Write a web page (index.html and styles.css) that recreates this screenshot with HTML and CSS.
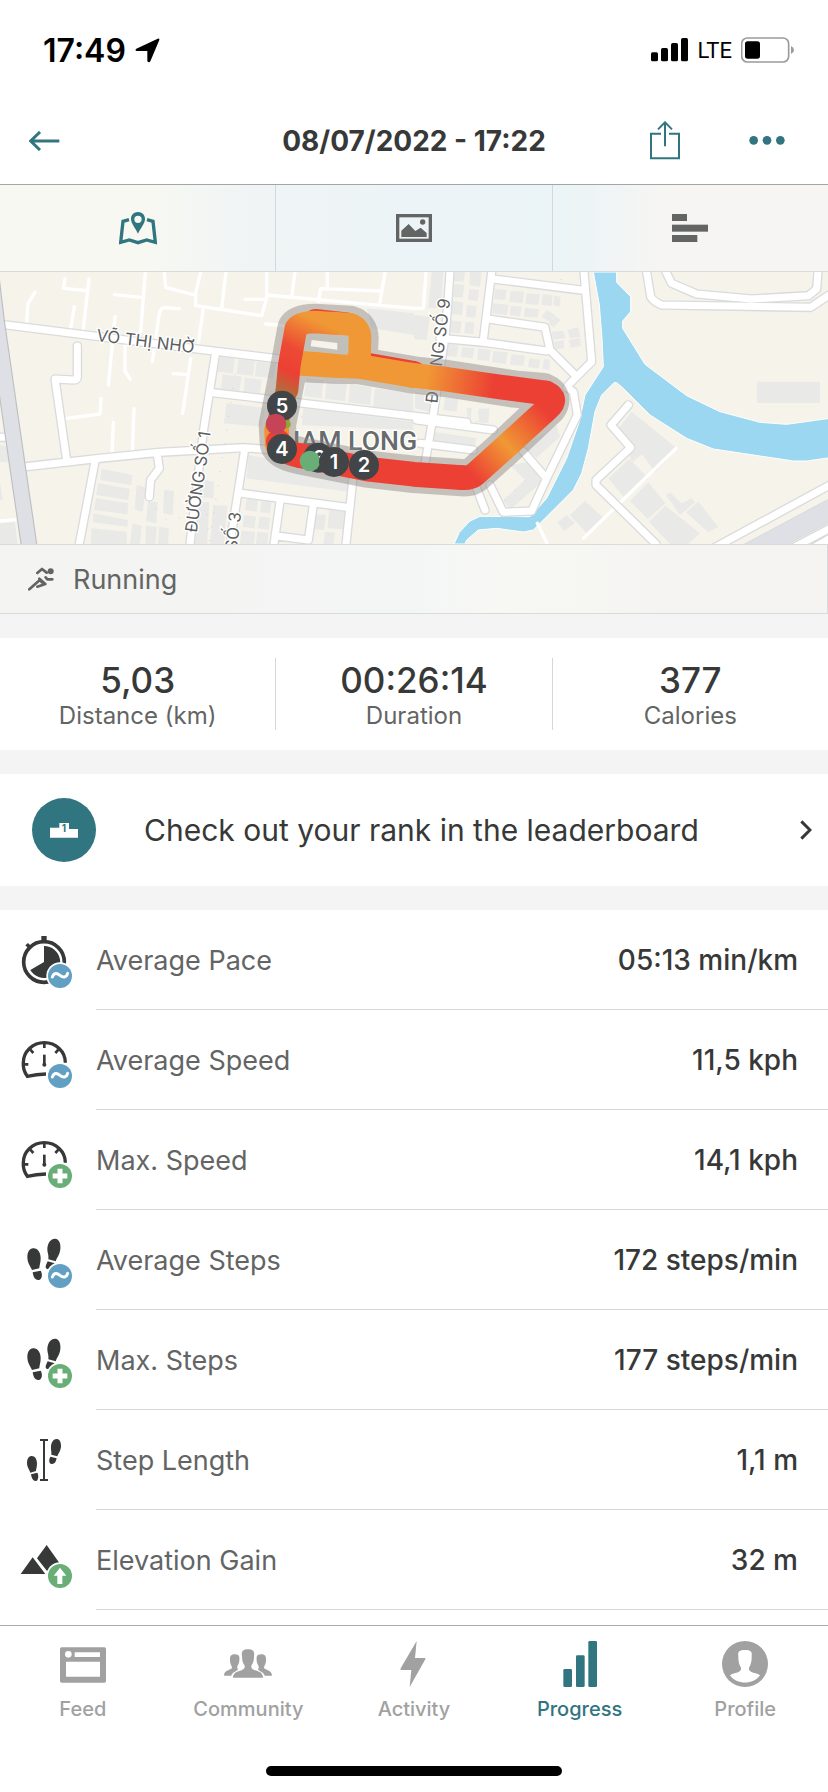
FILE: index.html
```html
<!DOCTYPE html>
<html lang="en">
<head>
  <title>Workout details</title>
  <meta charset="UTF-8">
  <meta name="viewport" content="width=device-width, initial-scale=1">
  <link rel="stylesheet" href="styles.css">
</head>
<body>
  <!-- Shared symbols -->
  <svg class="sprite" aria-hidden="true">
    <symbol id="badge-avg" viewBox="0 0 168 168">
      <circle cx="126" cy="132" r="41" fill="#fff"/>
      <circle cx="126" cy="132" r="36" fill="#619fc3"/>
      <path d="M103 135C108 122 116 122 126 130S145 137 149 124" fill="none" stroke="#fff" stroke-width="9" stroke-linecap="round"/>
    </symbol>
    <symbol id="badge-max" viewBox="0 0 168 168">
      <circle cx="126" cy="132" r="41" fill="#fff"/>
      <circle cx="126" cy="132" r="36" fill="#68ae76"/>
      <path d="M126 110v44M104 132h44" fill="none" stroke="#fff" stroke-width="15"/>
    </symbol>
    <symbol id="gauge" viewBox="0 0 168 168">
      <g fill="none" stroke="#373938" stroke-width="10">
        <path d="M84 126Q55 127 28 133Q14 114 16 92A63 60 0 0 1 142 92"/>
        <path d="M79 34v14M16 97h15M37 53l9 10M121 53l-9 10" stroke-width="8"/>
        <path d="M79 68v30" stroke-width="8"/>
      </g>
      <circle cx="79" cy="98" r="6" fill="#373938"/>
    </symbol>
    <symbol id="steps" viewBox="0 0 168 168">
      <g fill="#373938">
        <path d="M45 49C57 47 68 60 68 78C68 94 64 100 64 109L42 114C38 103 28 94 28 74C28 60 35 50 45 49Z"/>
        <path d="M44 121L68 116C74 126 73 142 62 144C50 145 46 134 44 121Z"/>
        <path d="M112 20C123 21 129 34 127 52C125 69 117 77 113 88L91 82C93 69 88 63 88 50C89 32 99 19 112 20Z"/>
        <path d="M89 88L110 94Q102 112 90 112Q80 110 84 99Z"/>
      </g>
    </symbol>
  </svg>

  <div class="status-bar">
    <div class="status-left">
      <span class="time">17:49</span>
      <svg width="25" height="25" viewBox="0 0 75 75"><path d="M4 32L68 2Q74 0 73 6L46 70Q42 76 37 70V39H6Q-2 37 4 32Z"/></svg>
    </div>
    <div class="status-right">
      <svg width="37" height="24" viewBox="0 0 111 72">
        <rect y="43" width="21" height="27" rx="5"/><rect x="30" y="30" width="21" height="40" rx="5"/>
        <rect x="60" y="15" width="21" height="55" rx="5"/><rect x="90" width="21" height="70" rx="5"/>
      </svg>
      <span class="carrier">LTE</span>
      <svg width="53" height="26" viewBox="0 0 159 78">
        <rect x="2" y="3" width="141" height="72" rx="17" fill="none" stroke="#9b9b9b" stroke-width="5"/>
        <rect x="12" y="13" width="45" height="52" rx="8"/>
        <path d="M150 27Q159 31 159 39T150 51Z" fill="#9b9b9b"/>
      </svg>
    </div>
  </div>

  <header class="header">
    <button class="icon-btn" aria-label="Back">
      <svg width="31" height="20" viewBox="0 0 93 60"><path d="M33 3L5 30L33 57M6 30H91" fill="none" stroke="#317580" stroke-width="9"/></svg>
    </button>
    <h1>08/07/2022 - 17:22</h1>
    <div class="header-actions">
      <button class="icon-btn" aria-label="Share">
        <svg width="30" height="40" viewBox="0 0 90 120"><g fill="none" stroke="#317580" stroke-width="6"><path d="M33 38H3V112H87V38H57"/><path d="M45 76V4M24 25L45 4L66 25"/></g></svg>
      </button>
      <button class="icon-btn" aria-label="More">
        <svg width="36" height="10" viewBox="0 0 108 30"><g fill="#317580"><circle cx="14" cy="13" r="13"/><circle cx="54" cy="13" r="13"/><circle cx="94" cy="13" r="13"/></g></svg>
      </button>
    </div>
  </header>

  <main>
    <div class="view-tabs">
      <button aria-label="Map">
        <svg width="38" height="34" viewBox="0 0 114 102">
          <path d="M30 26L12 31L5 94L31 87L57 95L83 87L109 94L102 31L84 26" fill="none" stroke="#317580" stroke-width="10"/>
          <path fill="#317580" fill-rule="evenodd" d="M57 3C44 3 36 12 36 24C36 38 50 52 57 68C64 52 78 38 78 24C78 12 70 3 57 3ZM57 14A11 11 0 1 1 57 36A11 11 0 1 1 57 14Z"/>
        </svg>
      </button>
      <button aria-label="Photos">
        <svg width="36" height="28" viewBox="0 0 108 84">
          <rect x="5" y="5" width="98" height="74" fill="none" stroke="#636564" stroke-width="10"/>
          <circle cx="80" cy="24" r="8" fill="#636564"/>
          <path d="M16 69V50L38 30L58 51L74 41L92 57V69Z" fill="#636564"/>
        </svg>
      </button>
      <button aria-label="Laps">
        <svg width="38" height="28" viewBox="0 0 114 84"><g fill="#636564"><rect x="3" width="45" height="21"/><rect x="3" y="32" width="108" height="21"/><rect x="3" y="63" width="76" height="21"/></g></svg>
      </button>
    </div>

    <svg class="map" viewBox="0 21 2484 816" role="img" aria-label="Route map">
      <defs>
        <g id="minor">
          <path d="M105 82L84 115L80 170M195 42L190 70L262 77M267 42L250 190M223 125L212 190M436 21L422 200M343 89L430 98M345 155L325 360M493 21L497 67L585 90M602 21L587 85V122L785 152L800 100V21M610 130L595 235M678 21L665 130M538 131L495 128Q482 128 478 145L457 290M735 103H800M800 90L1240 130M885 21L875 95M982 21V70M1155 21L1140 112M1143 78L962 71L955 110M797 177L850 182M375 240V318L390 342M572 280L548 445M520 326L562 328M303 400L300 447L200 460M402 430L397 560M340 472L336 570"/>
          <path d="M1278 21L1270 130H1240M2028 550L1750 820M1612 775L1642 837M0 768L45 764"/>
        </g>
        <g id="roads">
          <path d="M20 180L640 258L840 282M232 243V335Q232 345 220 345L165 342L200 585M78 605L300 580L480 562L730 548L840 556M647 262L610 500L570 837M640 383L850 408L1400 472M285 590L238 837M472 570L478 610L452 645L448 695M733 560L705 740L690 837M725 685L1050 728M840 710L822 837M940 720L925 825L825 812M1060 630L1038 837M0 517H18"/>
          <path d="M1350 21L1337 200L1295 480L1276 590M1475 21L1450 225M1480 42L1750 76M1752 21L1775 290L1715 350L1700 367L1720 380L1732 450L1640 640L1595 738L1510 742L1470 660M1465 162L1635 187L1650 255L1725 330M1320 220L1450 232L1640 258M1250 465L1480 495M1260 535L1420 555M1570 560L1635 635M1430 670L1455 735"/>
          <path d="M1940 21L1952 95Q1960 110 1985 120L2432 127L2484 92M1998 21L2015 55L2090 87L2255 102L2425 92L2450 72L2454 21M1885 420L1833 480L1892 548L1788 645V660L1968 837"/>
        </g>
        <path id="route" d="M835 535L832 480L868 300L888 190Q898 172 945 172L1050 178Q1080 187 1080 220L1076 300L910 296L1000 300L1078 302L1242 330L1342 341L1542 372L1630 380Q1665 395 1645 425L1512 550L1425 628Q1410 640 1385 638L1242 628L1100 612L900 572Q840 560 835 535"/>
        <linearGradient id="fade-left" gradientUnits="userSpaceOnUse" x1="860" y1="380" x2="960" y2="172">
          <stop offset="0" stop-color="#b8683a"/><stop offset=".25" stop-color="#ec4034"/><stop offset=".55" stop-color="#ec4a34"/><stop offset="1" stop-color="#f09835"/>
        </linearGradient>
        <linearGradient id="fade-top" gradientUnits="userSpaceOnUse" x1="1280" y1="330" x2="1480" y2="360">
          <stop offset="0" stop-color="#f09835"/><stop offset="1" stop-color="#ec4034"/>
        </linearGradient>
        <linearGradient id="fade-right" gradientUnits="userSpaceOnUse" x1="1640" y1="420" x2="1390" y2="650">
          <stop offset=".05" stop-color="#ec4034"/><stop offset=".5" stop-color="#f09835"/><stop offset=".9" stop-color="#ec4034"/>
        </linearGradient>
      </defs>

      <rect y="21" width="2484" height="816" fill="#f6f3ea"/>

      <!-- Buildings -->
      <g fill="#e9e9e7">
        <path d="M660 275L705 280L698 325L653 320ZM715 282L765 288L758 332L710 327ZM770 290L828 296L820 340L765 334ZM668 328L725 335L718 378L662 370ZM735 338L785 344L780 388L730 382ZM680 415L795 428L785 485L672 475Z"/>
        <path d="M1100 130L1242 145V210L1115 190ZM940 225L1040 235V262L930 250ZM920 340L970 345L965 400L912 393ZM980 350L1040 357L1035 408L975 402ZM1050 358L1115 367L1110 420L1045 412ZM1125 370L1240 385V440L1120 425ZM910 430L1240 470V495L905 480Z"/>
        <path d="M305 612L398 630L393 660L300 645ZM295 655L390 672L385 705L288 690ZM288 700L385 715L382 748L282 735ZM280 745L384 765L382 785L278 772ZM275 790L380 800V837H272ZM410 660L438 667L428 740L404 733ZM445 708L473 712L468 775L438 768ZM492 675L522 678L518 750L490 745ZM398 775L425 783L420 837H390ZM438 782L470 785L466 837H436ZM478 785L507 790L504 837H474ZM615 645L642 650L640 700L605 697ZM595 710L628 712L622 837H582ZM640 720L682 723L672 837H630ZM745 570L850 590L1050 630L1045 680L740 640ZM740 700L775 702L770 740L735 735ZM785 703L815 705L810 745L780 742ZM732 750L768 755L764 790L728 786ZM778 755L810 758L806 795L774 790ZM724 797L765 800L762 837H720ZM772 800L805 804L802 837H768ZM945 748L978 750L972 795L940 793ZM988 735L1037 740L1030 793L982 790ZM975 800L1005 803L1000 837H970ZM0 540L25 545L32 592H0ZM0 650L8 705H0ZM0 775L45 772L52 837H0Z"/>
        <path d="M1295 21H1330L1322 130L1285 128ZM1242 150L1290 155L1280 225L1242 222ZM1365 21H1395L1390 50L1362 48ZM1363 57L1393 60L1388 98L1360 95ZM1410 21H1445L1440 65L1408 60ZM1408 72L1437 75L1433 108L1404 105ZM1358 108L1390 112L1386 150L1352 147ZM1400 120L1430 123L1426 158L1398 155ZM1350 165L1385 170L1380 205L1347 202ZM1397 170L1423 173L1420 207L1393 204ZM1485 72L1520 75L1515 105L1482 102ZM1532 77L1572 80L1568 115L1528 110ZM1580 85L1620 88L1615 120L1576 117ZM1628 88L1658 90L1655 123L1624 120ZM1662 92L1682 95L1679 125L1659 120ZM1480 115L1526 120L1520 150L1477 145ZM1533 122L1565 125L1560 155L1529 150ZM1575 128L1617 133L1612 158L1572 155ZM1640 135L1665 150L1650 172L1625 155ZM1665 152L1682 165L1660 188L1647 175ZM1655 200L1690 197L1697 220L1660 224ZM1660 230L1692 226V250L1668 253ZM1703 195L1735 187L1742 215L1710 220ZM1707 225L1740 218L1743 243L1712 248Z"/>
        <path d="M1343 238L1375 242L1370 276L1338 272ZM1387 246L1423 250L1418 280L1383 276ZM1435 250L1472 255L1467 288L1431 284ZM1480 258L1523 262L1518 297L1476 292ZM1535 268L1575 272L1570 303L1530 299ZM1588 280L1620 284L1617 310L1584 307ZM1632 282L1650 284L1648 315L1628 312ZM1335 395L1375 400L1370 440L1330 435ZM1400 430L1415 428L1412 465L1402 463ZM1435 432L1468 430L1465 475L1436 472ZM1245 380L1290 388V440L1245 430ZM1300 500L1430 520L1420 555L1295 535Z"/>
        <path d="M2271 350H2460V414H2271ZM1895 440L2030 550L1967 622L1925 568L1898 592L1848 500ZM1888 582L1945 640L1873 698L1825 640ZM1945 652L1996 715L1943 762L1890 708ZM1996 722L2100 805L2065 837H2010L1947 770ZM2095 710L2155 785L2125 802L2058 742ZM2010 682L2045 715L2075 700L2085 712L2040 750L1998 690ZM1755 708L1808 757L1762 807L1710 750ZM1700 750L1725 775L1692 798L1672 772ZM1670 480L1680 515L1610 578L1570 545ZM1530 600L1590 590L1625 650L1530 735L1510 705L1575 645Z"/>
      </g>
      <path d="M440 700L500 765L620 748L628 830L712 290M1430 470V430M1514 705L1575 645M1575 550L1620 512M905 455V485M1684 45V21" fill="none" stroke="#aaa" stroke-width="2" stroke-dasharray="2 40"/>

      <!-- Canal -->
      <path d="M1780 21H1850V52L1892 95V140L1868 168V190L1935 298L2060 392L2160 440L2280 472L2360 478L2490 460V578L2420 588H2380L2140 552L2060 520L1950 450L1870 370L1850 353H1842L1805 390L1785 440L1765 550L1745 625L1720 675L1600 795L1570 801L1490 790L1435 795L1400 825L1395 837H1362L1378 802L1410 768L1440 754L1590 755L1640 700L1700 580L1738 470L1755 390L1810 305L1806 220L1798 120Z" fill="#9bd7f0" stroke="#fff" stroke-width="3"/>

      <use href="#minor" class="road-minor"/>
      <use href="#roads" class="road-edge"/>
      <use href="#roads" class="road"/>

      <!-- Highways -->
      <path d="M-28 21L-10 170L52 600L90 860" fill="none" stroke="#bfc0c4" stroke-width="50"/>
      <path d="M-28 21L-10 170L52 600L90 860" fill="none" stroke="#dfe0e5" stroke-width="43"/>
      <path d="M2140 850L2490 660M2310 885L2490 790M2360 895L2490 820" class="road-edge"/>
      <path d="M2140 850L2490 660M2310 885L2490 790M2360 895L2490 820" class="road"/>
      <path d="M2200 855L2500 695L2500 765L2330 855Z" fill="#dfe0e5" stroke="#d0d1d5" stroke-width="2"/>

      <!-- Place and street names -->
      <text class="street" transform="translate(288 228) rotate(7)">VÕ THỊ NHỜ</text>
      <text class="street" transform="translate(590 804) rotate(-82)">ĐƯỜNG SỐ 1</text>
      <text class="street" transform="translate(710 858) rotate(-83)">SỐ 3</text>
      <text class="street" transform="translate(1312 416) rotate(-83)">ĐƯỜNG SỐ 9</text>
      <text class="place" x="844" y="556">NAM LONG</text>

      <!-- Route -->
      <use href="#route" class="route-halo"/>
      <g class="route">
        <path d="M828 490L862 368" stroke="#b06a3a" stroke-width="64"/>
        <path d="M832 540L830 495" stroke="#f09030"/>
        <path d="M1090 297L1242 324" stroke="#ec4034" stroke-width="72"/>
        <path d="M945 166L1040 176" stroke="#ec4034" stroke-width="68"/>
        <path d="M905 295L1000 301L1078 304L1242 332" stroke="#f09835"/>
        <path d="M1000 174L1050 178Q1080 187 1080 220L1078 302" stroke="#f09835" stroke-width="68"/>
        <path d="M1638 384L1500 366L1342 343L1230 330" stroke="url(#fade-top)"/>
        <path d="M900 572L1100 612L1242 628L1385 638" stroke="#ec4034"/>
        <path d="M1638 384Q1675 400 1645 428L1512 550L1425 628Q1410 640 1385 638" stroke="url(#fade-right)"/>
        <path d="M835 530Q840 560 900 572" stroke="#ec4034"/>
        <path d="M861 375L868 300L888 190Q898 172 945 171L1010 176" stroke="url(#fade-left)" stroke-width="68"/>
      </g>
      <path d="M924 206L1044 217L1042 270L912 257Z" fill="#c2bfb9"/>
      <path d="M935 225L1012 234V254L932 244Z" fill="#f6f3ea"/>

      <g class="marker">
        <circle cx="860" cy="478" r="12" fill="#8fa834"/>
        <circle cx="846" cy="422" r="45"/><text x="846" y="444">5</text>
        <circle cx="828" cy="477" r="31" fill="#c64456"/>
        <circle cx="846" cy="552" r="45"/><text x="846" y="574">4</text>
        <circle cx="955" cy="578" r="45"/><text x="958" y="600">3</text>
        <circle cx="930" cy="588" r="31" fill="#68ae76"/>
        <circle cx="1002" cy="591" r="45"/><text x="1002" y="613">1</text>
        <circle cx="1092" cy="600" r="45"/><text x="1092" y="622">2</text>
      </g>
    </svg>

    <div class="sport">
      <svg width="26" height="24" viewBox="0 0 78 72">
        <g fill="none" stroke="#636564" stroke-width="8" stroke-linecap="round" stroke-linejoin="round">
          <path d="M28 18L42 6L56 17M4 67L32 42M34 35L52 51L28 59M38 42L46 50M53 31L58 37H73"/>
        </g>
        <circle cx="68" cy="13" r="9" fill="#636564"/>
      </svg>
      <span>Running</span>
    </div>

    <section class="stats">
      <div class="stat"><strong>5,03</strong><span>Distance (km)</span></div>
      <div class="stat"><strong>00:26:14</strong><span>Duration</span></div>
      <div class="stat"><strong>377</strong><span>Calories</span></div>
    </section>

    <a href="#leaderboard" class="leaderboard">
      <span class="leaderboard-icon">
        <svg width="28" height="16" viewBox="0 0 84 48">
          <path d="M0 17H28V3H57V21H84V47H0Z" fill="#fff"/>
          <text x="42" y="29" class="podium">1</text>
        </svg>
      </span>
      <span class="leaderboard-text">Check out your rank in the leaderboard</span>
      <svg width="12" height="20" viewBox="0 0 36 60"><path d="M4 4L30 30L4 56" fill="none" stroke="#373938" stroke-width="9"/></svg>
    </a>

    <dl class="metrics">
      <div class="metric">
        <svg class="metric-icon" viewBox="0 0 168 168">
          <circle cx="78" cy="90" r="61" fill="none" stroke="#373938" stroke-width="11"/>
          <path d="M78 90V42A48 48 0 1 1 37 114Z" fill="#373938"/>
          <path d="M70 12h16v14h-16zM22 40l8-7 12 12-7 8z" fill="#373938"/>
          <use href="#badge-avg"/>
        </svg>
        <dt>Average Pace</dt><dd>05:13 min/km</dd>
      </div>
      <div class="metric">
        <svg class="metric-icon" viewBox="0 0 168 168"><use href="#gauge"/><use href="#badge-avg"/></svg>
        <dt>Average Speed</dt><dd>11,5 kph</dd>
      </div>
      <div class="metric">
        <svg class="metric-icon" viewBox="0 0 168 168"><use href="#gauge"/><use href="#badge-max"/></svg>
        <dt>Max. Speed</dt><dd>14,1 kph</dd>
      </div>
      <div class="metric">
        <svg class="metric-icon" viewBox="0 0 168 168"><use href="#steps"/><use href="#badge-avg"/></svg>
        <dt>Average Steps</dt><dd>172 steps/min</dd>
      </div>
      <div class="metric">
        <svg class="metric-icon" viewBox="0 0 168 168"><use href="#steps"/><use href="#badge-max"/></svg>
        <dt>Max. Steps</dt><dd>177 steps/min</dd>
      </div>
      <div class="metric">
        <svg class="metric-icon" viewBox="0 0 168 168">
          <g fill="#373938">
            <path d="M40 72C50 71 57 80 57 95C57 106 54 110 54 117L37 122C34 112 27 106 27 92C27 80 32 73 40 72Z"/>
            <path d="M39 127L58 122C63 130 61 145 54 147C45 148 41 139 39 127Z"/>
            <path d="M117 21C126 22 130 32 129 45C127 59 121 64 118 73L100 68C101 58 98 54 99 43C100 30 107 20 117 21Z"/>
            <path d="M97 74L116 79C114 90 109 97 101 96C92 94 92 84 97 74Z"/>
          </g>
          <path d="M66 24H90M78 24V144M66 144H90" fill="none" stroke="#373938" stroke-width="6"/>
        </svg>
        <dt>Step Length</dt><dd>1,1 m</dd>
      </div>
      <div class="metric">
        <svg class="metric-icon" viewBox="0 0 168 168">
          <path d="M8 126L44 76L82 126ZM86 39L57 79L90 121L145 122Z" fill="#373938"/>
          <circle cx="126" cy="132" r="41" fill="#fff"/>
          <circle cx="126" cy="132" r="36" fill="#68ae76"/>
          <path d="M126 107L145 131H133V156H118V131H107Z" fill="#fff"/>
        </svg>
        <dt>Elevation Gain</dt><dd>32 m</dd>
      </div>
    </dl>
  </main>

  <footer class="footer">
    <nav class="tab-bar">
      <a href="#feed">
        <svg width="46" height="46" viewBox="0 0 138 138"><path fill="#a1a1a1" fill-rule="evenodd" d="M5 19H133Q138 19 138 24V120Q138 125 133 125H5Q0 125 0 120V24Q0 19 5 19ZM25 30A10 10 0 1 0 25 50A10 10 0 1 0 25 30ZM44 34V48H120V34ZM18 62V107H120V62Z"/></svg>
        <span>Feed</span>
      </a>
      <a href="#community">
        <svg width="48" height="46" viewBox="0 0 144 138">
          <g fill="#a1a1a1">
            <path id="side-person" d="M32 40C20 40 17 47 18 58C18 68 22 74 24 78C25 89 0 84 0 104H22C24 94 36 91 42 86C40 80 38 79 41 74C46 66 47 57 46 48C45 42 40 40 32 40Z"/>
            <use href="#side-person" transform="translate(144 0) scale(-1 1)"/>
            <path d="M72 25C55 25 52 32 54 47C54 60 58 68 62 74C65 94 27 84 27 110H117C117 84 79 94 82 74C86 68 90 60 90 47C92 32 89 25 72 25Z"/>
          </g>
        </svg>
        <span>Community</span>
      </a>
      <a href="#activity">
        <svg width="46" height="46" viewBox="0 0 138 138"><path d="M77 0L72 51H102Q105 52 103 55L56 138L61 87H30Q27 86 29 82Z" fill="#a1a1a1"/></svg>
        <span>Activity</span>
      </a>
      <a href="#progress" class="active">
        <svg width="46" height="46" viewBox="0 0 138 138"><g fill="#317580"><rect x="19" y="84" width="26" height="54" rx="4"/><rect x="57" y="43" width="26" height="95" rx="4"/><rect x="94" width="26" height="138" rx="4"/></g></svg>
        <span>Progress</span>
      </a>
      <a href="#profile">
        <svg width="46" height="46" viewBox="0 0 138 138">
          <circle cx="69" cy="69" r="69" fill="#a1a1a1"/>
          <path d="M69 27C53 27 47 31 49 45C48 60 52 72 57 80C60 97 36 93 24 103C44 132 94 132 114 103C102 93 78 97 81 80C86 72 90 60 89 45C91 31 85 27 69 27Z" fill="#fff"/>
        </svg>
        <span>Profile</span>
      </a>
    </nav>
    <div class="home-indicator"></div>
  </footer>
</body>
</html>
```

FILE: styles.css
```css
* {
  box-sizing: border-box;
}

body {
  margin: 0;
  min-height: 100vh;
  display: flex;
  flex-direction: column;
  font-family: Inter, "Liberation Sans", sans-serif;
  color: #373938;
  background-color: #fff;
}

svg {
  display: block;
  flex: none;
}

.sprite {
  position: absolute;
  width: 0;
  height: 0;
}

.status-bar {
  display: flex;
  align-items: center;
  justify-content: space-between;
  height: 100px;
  padding: 0 34px 0 43px;
  color: #000;
}

.status-left, .status-right {
  display: flex;
  align-items: center;
  gap: 9px;
}

.time {
  font-size: 32px;
  font-weight: 600;
}

.carrier {
  font-family: Roboto, sans-serif;
  font-size: 22px;
}

.header {
  display: grid;
  grid-template-columns: 1fr auto 1fr;
  align-items: center;
  height: 85px;
  padding: 0 29px 2px;
  border-bottom: 1px solid #a3a6a5;
}

h1 {
  margin: 0;
  font-size: 28px;
  font-weight: 700;
}

.header-actions {
  display: flex;
  align-items: center;
  justify-content: flex-end;
  gap: 69px;
  padding-right: 14px;
}

.icon-btn {
  padding: 0;
  border: none;
  background: none;
  cursor: pointer;
  justify-self: start;
}

main {
  flex: 1;
}

.view-tabs {
  display: flex;
  height: 87px;
  border-bottom: 1px solid #d9dbda;
  background: linear-gradient(to right, #f7f8f2 18%, #f0f4f5 30%, #ecf4f7 52%, #ebf4f6 68%, #f6f5f3 80%);
}

.view-tabs button {
  flex: 1;
  display: flex;
  align-items: center;
  justify-content: center;
  padding: 0;
  border: none;
  border-right: 1px solid #d5d8d8;
  background: none;
  cursor: pointer;
}

.view-tabs button:last-child {
  border-right: none;
}

/* Map */
.map {
  width: 100%;
  height: auto;
}

.road-minor, .road-edge, .road {
  fill: none;
  stroke: #fff;
  stroke-linecap: round;
  stroke-linejoin: round;
}

.road-minor {
  stroke-width: 10px;
}

.road-edge {
  stroke: #dadbdc;
  stroke-width: 29px;
}

.road {
  stroke-width: 21px;
}

.street {
  font-size: 50px;
  fill: #5c5e60;
  stroke: #fff;
  stroke-width: 8px;
  paint-order: stroke;
}

.place {
  font-family: Roboto, sans-serif;
  font-size: 80px;
  font-weight: 500;
  fill: #676b6c;
  stroke: #fff;
  stroke-width: 8px;
  paint-order: stroke;
}

.route-halo {
  fill: none;
  stroke: #8a8680;
  stroke-opacity: .45;
  stroke-width: 112px;
  stroke-linecap: round;
  stroke-linejoin: round;
}

.route {
  fill: none;
  stroke-width: 74px;
  stroke-linecap: round;
  stroke-linejoin: round;
}

.marker {
  fill: #414547;
}

.marker text {
  font-size: 60px;
  font-weight: 600;
  text-anchor: middle;
  fill: #fff;
}

.sport {
  display: flex;
  align-items: center;
  gap: 19px;
  height: 70px;
  padding-left: 28px;
  border: 1px solid #d9dbda;
  border-left: none;
  background: linear-gradient(to right, #f4f4f2 20%, #f4f6f6 50%, #f7f8f4 60%, #f5f4f2 80%);
  font-size: 27px;
  color: #636564;
}

/* Totals */
.stats {
  display: flex;
  padding: 20px 0;
  border-top: 24px solid #f4f4f4;
  border-bottom: 24px solid #f4f4f4;
}

.stat {
  flex: 1;
  display: flex;
  flex-direction: column;
  align-items: center;
  height: 72px;
  border-right: 1px solid #d5d7d6;
}

.stat:last-child {
  border-right: none;
}

.stat strong {
  font-size: 35px;
  font-weight: 500;
  line-height: 44px;
}

.stat span {
  font-size: 24px;
  line-height: 28px;
  color: #636564;
}

.leaderboard {
  display: flex;
  align-items: center;
  height: 112px;
  padding: 0 16px 0 32px;
  color: #373938;
  text-decoration: none;
}

.leaderboard-icon {
  display: flex;
  align-items: center;
  justify-content: center;
  width: 64px;
  height: 64px;
  border-radius: 50%;
  background-color: #317580;
}

.podium {
  font-size: 30px;
  font-weight: 700;
  text-anchor: middle;
  fill: #317580;
}

.leaderboard-text {
  flex: 1;
  margin-left: 48px;
  font-size: 30px;
}

/* Metrics list */
.metrics {
  margin: 0;
  border-top: 24px solid #f4f4f4;
}

.metric {
  display: flex;
  align-items: center;
  height: 100px;
  padding-right: 30px;
  background: linear-gradient(#d5d7d6, #d5d7d6) 96px 100% / 100% 1px no-repeat;
}

.metric-icon {
  width: 56px;
  height: 56px;
  margin: 0 22px 0 18px;
}

.metric dt {
  flex: 1;
  font-size: 27px;
  color: #636564;
}

.metric dd {
  margin: 0;
  font-size: 28px;
  font-weight: 500;
}

/* Bottom navigation */
.footer {
  position: sticky;
  bottom: 0;
  height: 167px;
  border-top: 1px solid #a9abaa;
  background-color: #fff;
}

.tab-bar {
  display: flex;
  padding-top: 15px;
}

.tab-bar a {
  flex: 1;
  display: flex;
  flex-direction: column;
  align-items: center;
  gap: 10px;
  font-size: 20px;
  font-weight: 500;
  line-height: 24px;
  color: #a1a1a1;
  text-decoration: none;
}

.tab-bar .active {
  color: #317580;
}

.home-indicator {
  width: 296px;
  height: 10px;
  margin: 45px auto 0;
  border-radius: 5px;
  background-color: #000;
}
```
